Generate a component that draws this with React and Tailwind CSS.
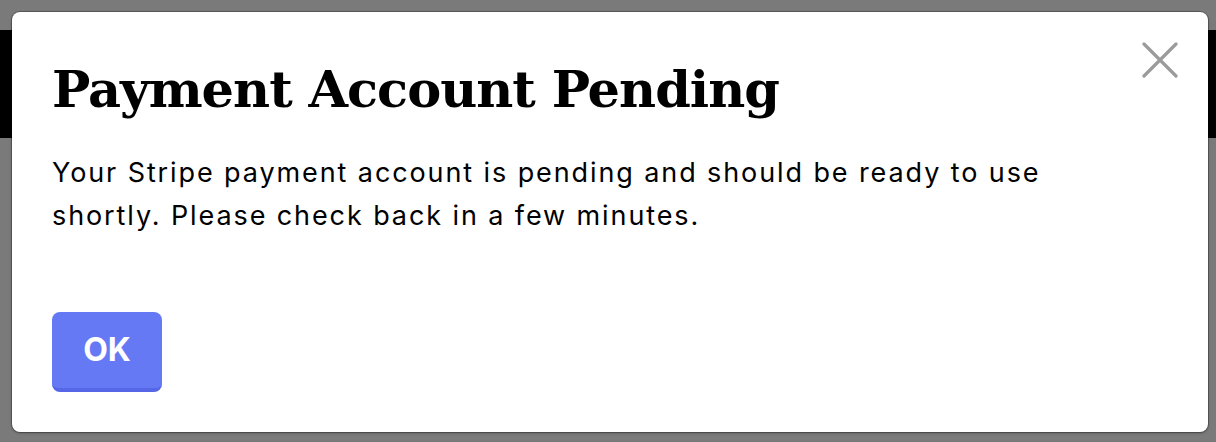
export default function App() {
  return (
    <div className="relative w-[1216px] h-[442px] bg-[#7a7a7a] overflow-hidden">
      <div className="h-[30px]" />
      <div className="h-[108px] bg-black" />
      <div className="absolute left-[12px] top-[12px] w-[1196px] h-[420px] bg-white rounded-[8px] shadow-[0_0_0_1px_rgba(0,0,0,0.25),0_1px_3px_rgba(0,0,0,0.3)] px-[40px] pt-[49px]">
        <button className="absolute right-[30px] top-[30px] w-[36px] h-[36px] flex items-center justify-center">
          <svg width="36" height="36" viewBox="0 0 36 36" fill="none">
            <path d="M2 2 L34 34 M34 2 L2 34" stroke="#9b9b9b" strokeWidth="3.2" strokeLinecap="round" />
          </svg>
        </button>
        <h1 className="text-[51px] leading-[56px] font-bold text-black [font-family:'DejaVu_Serif',serif] tracking-[-1px]">
          Payment Account Pending
        </h1>
        <p className="mt-[34px] text-[27px] leading-[43px] text-black [font-family:Inter,sans-serif] tracking-[1.9px] w-[1080px]">
          Your Stripe payment account is pending and should be ready to use shortly. Please check back in a few minutes.
        </p>
        <button className="mt-[75px] w-[110px] h-[80px] rounded-[8px] bg-[#6679f5] border-b-[4px] border-[#5567e6] text-white text-[32px] font-bold [font-family:Inter,sans-serif]">
          OK
        </button>
      </div>
    </div>
  );
}
